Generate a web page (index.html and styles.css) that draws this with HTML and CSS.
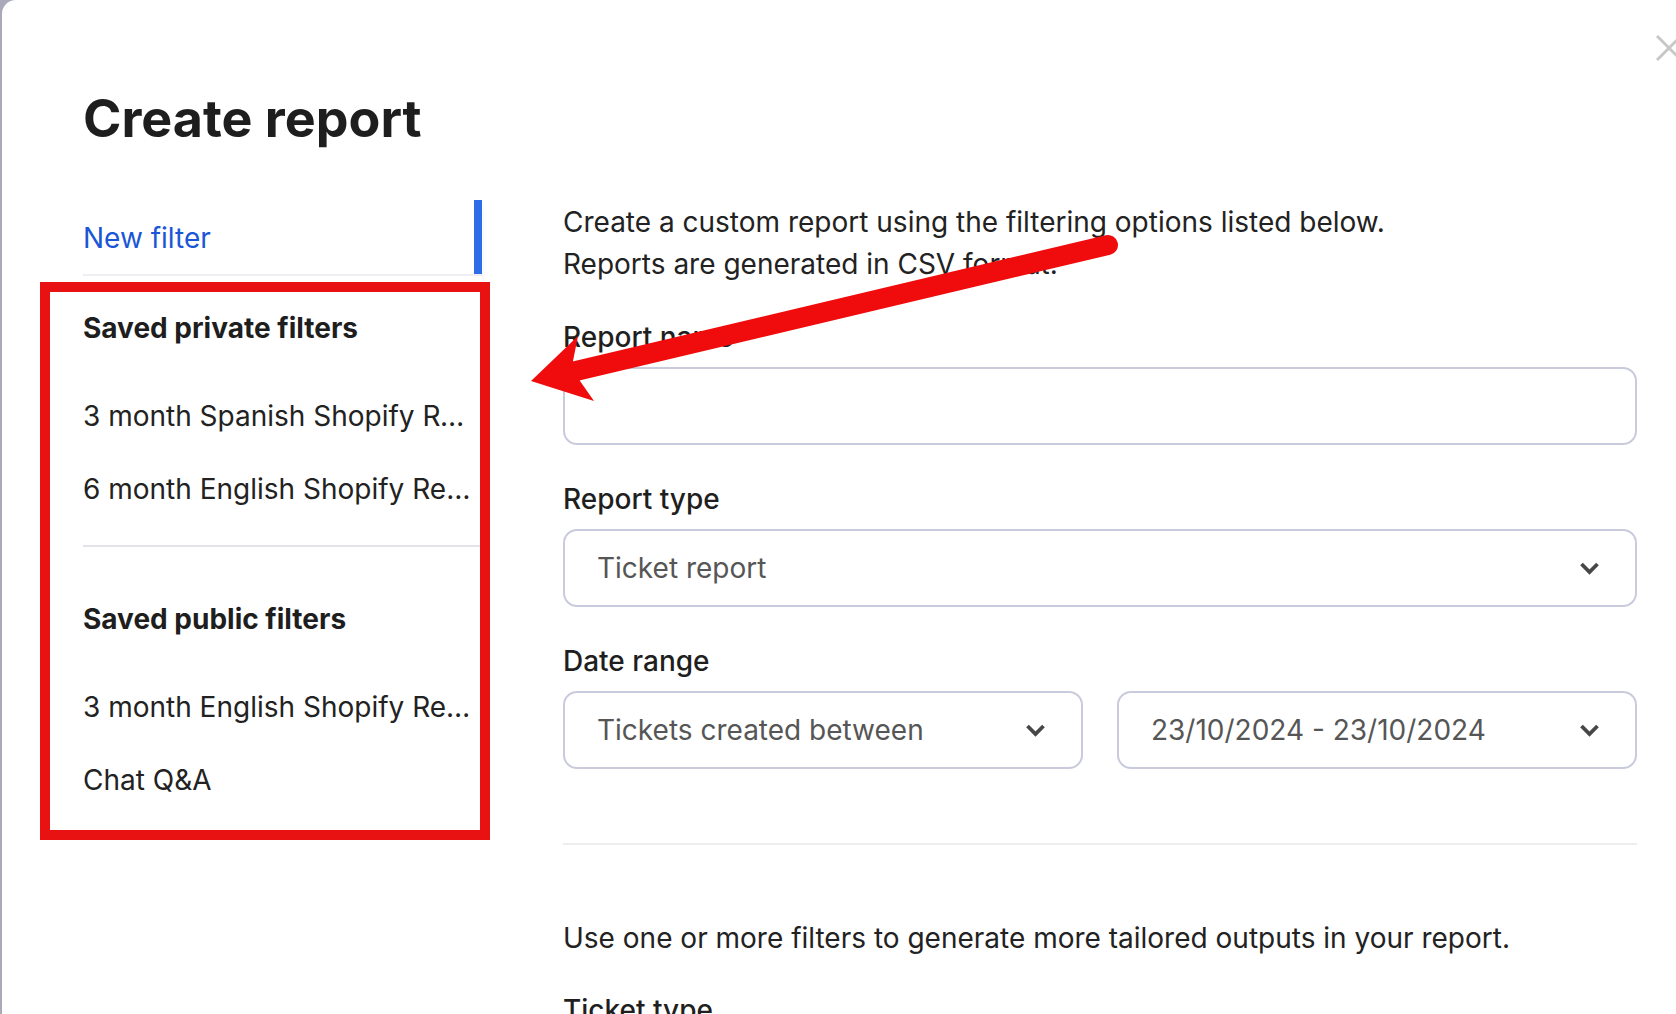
FILE: index.html
```html
<!DOCTYPE html>
<html lang="en">
<head>
<meta charset="utf-8">
<title>Create report</title>
<link rel="stylesheet" href="styles.css">
</head>
<body>
<div class="modal">
  <button class="close" aria-label="Close">
    <svg width="26" height="26" viewBox="0 0 26 26"><path d="M1 1 L25 25 M1 25 L25 1" stroke="#c8c8c8" stroke-width="3" fill="none"/></svg>
  </button>
  <h1 class="title">Create report</h1>
  <div class="layout">
    <aside class="sidebar">
      <div class="nav-item">New filter</div>
      <section class="group">
        <h2>Saved private filters</h2>
        <ul>
          <li>3 month Spanish Shopify Report</li>
          <li>6 month English Shopify Report</li>
        </ul>
      </section>
      <section class="group">
        <h2>Saved public filters</h2>
        <ul>
          <li>3 month English Shopify Report</li>
          <li>Chat Q&amp;A</li>
        </ul>
      </section>
    </aside>
    <main class="content">
      <p class="desc">Create a custom report using the filtering options listed below.<br>Reports are generated in CSV format.</p>
      <div class="field">
        <label class="label">Report name</label>
        <div class="control"></div>
      </div>
      <div class="field">
        <label class="label">Report type</label>
        <div class="control select">
          <span>Ticket report</span>
          <svg class="chev" width="21" height="14" viewBox="0 0 21 14"><path d="M2.5 3 L10.5 11 L18.5 3" stroke="#474747" stroke-width="3.8" fill="none"/></svg>
        </div>
      </div>
      <div class="field">
        <label class="label">Date range</label>
        <div class="row">
          <div class="control select">
            <span>Tickets created between</span>
            <svg class="chev" width="21" height="14" viewBox="0 0 21 14"><path d="M2.5 3 L10.5 11 L18.5 3" stroke="#474747" stroke-width="3.8" fill="none"/></svg>
          </div>
          <div class="control select">
            <span>23/10/2024 - 23/10/2024</span>
            <svg class="chev" width="21" height="14" viewBox="0 0 21 14"><path d="M2.5 3 L10.5 11 L18.5 3" stroke="#474747" stroke-width="3.8" fill="none"/></svg>
          </div>
        </div>
      </div>
      <hr class="sep">
      <p class="hint">Use one or more filters to generate more tailored outputs in your report.</p>
      <div class="label next">Ticket type</div>
    </main>
  </div>
</div>
<div class="annot-box"></div>
<svg class="annot-arrow" width="1676" height="1014" viewBox="0 0 1676 1014">
  <line x1="576" y1="371" x2="1108" y2="245" stroke="#f00c0c" stroke-width="20" stroke-linecap="round"/>
  <polygon points="531,381 578,336 573,361 580,381 594,401" fill="#f00c0c"/>
</svg>
</body>
</html>
```
FILE: styles.css
```css
html, body {
  margin: 0;
  padding: 0;
}
body {
  background: #a9a9ba;
  font-family: Inter, "Noto Sans", sans-serif;
  color: #1f1f1f;
  overflow: hidden;
  height: 1014px;
  position: relative;
}
.modal {
  margin-left: 2px;
  min-height: 1014px;
  background: #ffffff;
  border-top-left-radius: 14px;
  padding: 88px 0 0 81px;
  box-sizing: border-box;
  position: relative;
}
.close {
  position: absolute;
  left: 1654px;
  top: 35px;
  width: 26px;
  height: 26px;
  padding: 0;
  border: 0;
  background: none;
}
.close svg { display: block; }
.title {
  margin: 0 0 50px;
  font-size: 52px;
  line-height: 62px;
  font-weight: 700;
  color: #1e1e1e;
}
.layout {
  display: flex;
  gap: 81px;
  align-items: flex-start;
}
.sidebar {
  width: 399px;
  flex: none;
  box-shadow: 6px 0 8px -6px rgba(0, 0, 0, 0.06);
}
.nav-item {
  height: 74px;
  line-height: 76px;
  font-size: 28px;
  color: #1a56d6;
  box-shadow: inset -8px 0 0 #2d6ee8;
  border-bottom: 2px solid #eeeef3;
}
.group {
  padding-top: 32px;
  padding-bottom: 19.5px;
  border-bottom: 2px solid #e4e4e8;
}
.group + .group {
  padding-top: 52px;
  border-bottom: 0;
}
.group h2 {
  margin: 0 0 31.5px;
  font-size: 28px;
  line-height: 40px;
  font-weight: 700;
  color: #1e1e1e;
}
.group ul {
  list-style: none;
  margin: 0;
  padding: 0;
}
.group li {
  height: 73px;
  line-height: 73px;
  font-size: 28px;
  color: #222222;
  white-space: nowrap;
  overflow: hidden;
  text-overflow: ellipsis;
  padding-right: 8px;
}
.content {
  width: 1074px;
  flex: none;
  padding-top: 1px;
}
.desc, .hint {
  margin: 0;
  font-size: 28px;
  line-height: 42px;
  color: #222222;
}
.field {
  margin-top: 36px;
}
.field:first-of-type {
  margin-top: 34px;
}
.label {
  display: block;
  font-size: 28px;
  line-height: 36px;
  font-weight: 500;
  color: #1f1f1f;
  margin-bottom: 12px;
}
.control {
  height: 78px;
  box-sizing: border-box;
  border: 2px solid #c9cbdd;
  border-radius: 14px;
  background: #ffffff;
}
.select {
  display: flex;
  align-items: center;
  justify-content: space-between;
  padding: 0 35px 0 32px;
  font-size: 28px;
  color: #565656;
}
.chev { display: block; flex: none; }
.row {
  display: grid;
  grid-template-columns: 1fr 1fr;
  gap: 34px;
}
.sep {
  margin: 74px 0 0;
  border: 0;
  height: 2px;
  background: #eeeeee;
}
.hint {
  margin-top: 72px;
}
.next {
  margin-top: 32.5px;
}
.annot-box {
  position: absolute;
  left: 40px;
  top: 282px;
  width: 450px;
  height: 558px;
  box-sizing: border-box;
  border: 10px solid #e81212;
}
.annot-arrow {
  position: absolute;
  left: 0;
  top: 0;
  pointer-events: none;
}
```
